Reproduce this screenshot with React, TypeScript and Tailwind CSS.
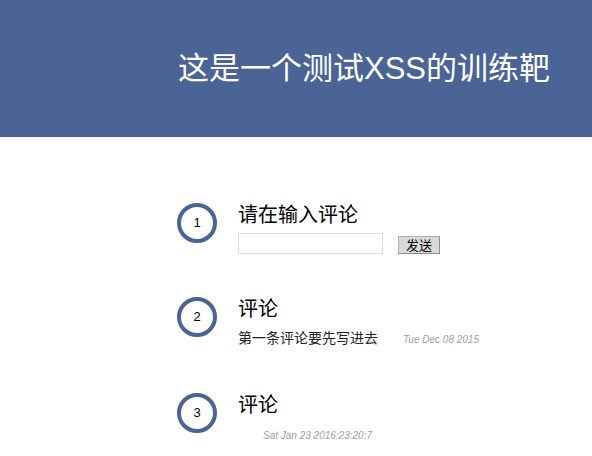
export default function App() {
  const font = { fontFamily: '"Liberation Sans", "Noto Sans CJK SC", sans-serif' };

  return (
    <div className="min-h-screen bg-white text-[#222]" style={font}>
      {/* header */}
      <header className="h-[137px] bg-[#4a6495] flex items-center pl-[178px]">
        <h1 className="text-[31px] leading-none font-normal text-white whitespace-nowrap">
          这是一个测试XSS的训练靶
        </h1>
      </header>

      {/* comment list */}
      <main className="pt-[66px] pl-[177px] flex flex-col gap-[43px]">
        <div className="flex gap-[21px]">
          <div className="w-10 h-10 shrink-0 rounded-full border-4 border-[#4a6495] flex items-center justify-center text-[13px] text-black">
            1
          </div>
          <div>
            <div className="text-[20px] leading-[24px] text-black">请在输入评论</div>
            <div className="mt-[6px] flex items-end">
              <input type="text" className="w-[145px] h-[21px] border border-[#dcdcdc] bg-white outline-none px-1 text-[13px]" />
              <button className="ml-[15px] w-[42px] h-[18px] bg-[#d8d8d8] border border-[#8c8c8c] border-t-[#b0b0b0] border-l-[#b0b0b0] text-[13px] leading-none text-black">
                发送
              </button>
            </div>
          </div>
        </div>

        <div className="flex gap-[21px]">
          <div className="w-10 h-10 shrink-0 rounded-full border-4 border-[#4a6495] flex items-center justify-center text-[13px] text-black">
            2
          </div>
          <div>
            <div className="text-[20px] leading-[24px] text-black">评论</div>
            <div className="mt-[7px] text-[14px] leading-[20px] whitespace-nowrap">
              <span>第一条评论要先写进去</span>
              <span className="ml-[25px] text-[10px] italic text-[#a0a0a0]">Tue Dec 08 2015</span>
            </div>
          </div>
        </div>

        <div className="flex gap-[21px]">
          <div className="w-10 h-10 shrink-0 rounded-full border-4 border-[#4a6495] flex items-center justify-center text-[13px] text-black">
            3
          </div>
          <div>
            <div className="text-[20px] leading-[24px] text-black">评论</div>
            <div className="mt-[7px] text-[14px] leading-[20px] whitespace-nowrap">
              <span></span>
              <span className="ml-[25px] text-[10px] italic text-[#a0a0a0]">Sat Jan 23 2016:23:20:7</span>
            </div>
          </div>
        </div>
      </main>
    </div>
  );
}
